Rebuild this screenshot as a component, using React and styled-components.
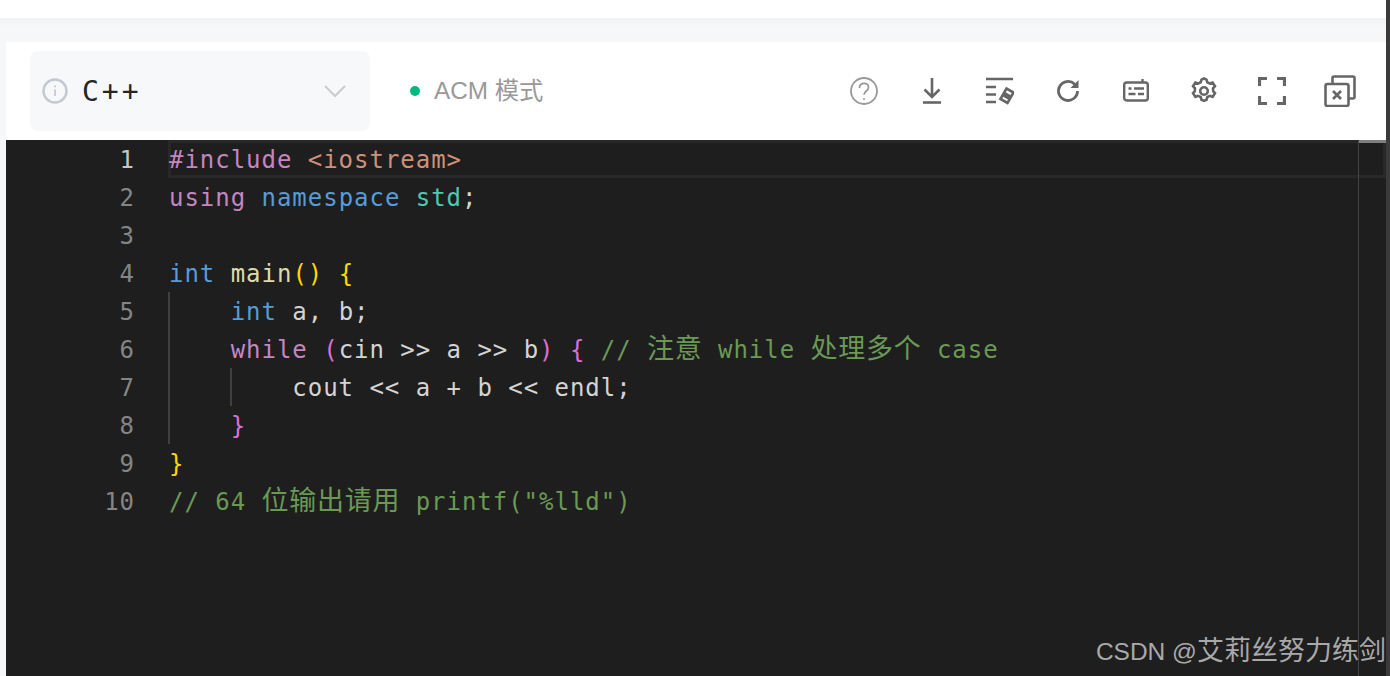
import React from 'react'
import styled, { createGlobalStyle } from 'styled-components'

const mono = `"DejaVu Sans Mono", "Liberation Mono", monospace`

const GlobalStyle = createGlobalStyle`
  html, body {
    margin: 0;
    padding: 0;
    background: #fff;
    overflow: hidden;
  }
`

const Page = styled.div`
  width: 1390px;
  height: 676px;
  display: flex;
  overflow: hidden;
  background: #fff;
`

const Main = styled.div`
  flex: 1;
  min-width: 0;
  display: flex;
  flex-direction: column;
`

const RightStrip = styled.div`
  width: 4px;
  flex: none;
  background: #3a3a3a;
`

const TopBand = styled.div`
  height: 18px;
  flex: none;
  background: #fff;
`

const GreyBand = styled.div`
  height: 24px;
  flex: none;
  background: linear-gradient(#f2f3f5, #f6f7f9 40%);
`

const Panel = styled.div`
  flex: 1;
  min-height: 0;
  display: flex;
  flex-direction: column;
  padding-left: 6px;
  background: #f6f7f9;
`

const Toolbar = styled.div`
  height: 98px;
  flex: none;
  display: flex;
  align-items: center;
  padding: 0 30px 0 24px;
  background: #fff;
`

const LangSelect = styled.div`
  width: 340px;
  height: 80px;
  box-sizing: border-box;
  padding: 0 21px 0 11px;
  display: flex;
  align-items: center;
  background: #f7f8fa;
  border-radius: 8px;
`

const LangName = styled.span`
  margin-left: 13px;
  flex: 1;
  font: 28px ${mono};
  letter-spacing: 3px;
  color: #262626;
`

const Mode = styled.div`
  margin-left: 40px;
  display: flex;
  align-items: center;
  gap: 14px;
  font: 24.3px "Liberation Sans", "Noto Sans CJK SC", sans-serif;
  color: #999;
`

const ModeLabel = styled.span`
  margin-top: -5px;
`

const Dot = styled.span`
  width: 10px;
  height: 10px;
  border-radius: 50%;
  background: #00b97f;
`

const Actions = styled.div`
  margin-left: auto;
  display: flex;
  align-items: center;
  gap: 40px;
`

const Icon = styled.svg`
  width: 28px;
  height: 28px;
  flex: none;
  fill: none;
  stroke: ${props => props.$colour || '#666'};
  stroke-width: ${props => props.$weight || 2.4};
`

const WideIcon = styled(Icon)`
  width: 32px;
  height: 32px;
  margin-left: -2px;
`

const Editor = styled.div`
  flex: 1;
  min-height: 0;
  position: relative;
  display: flex;
  background: #1e1e1e;
  overflow: hidden;
  font-family: ${mono};
  font-size: 24px;
  letter-spacing: 0.97px;
  white-space: pre;
`

const Gutter = styled.div`
  width: 129px;
  flex: none;
`

const LineNo = styled.div`
  height: 38px;
  line-height: 40px;
  text-align: right;
  color: ${props => (props.$active ? '#c6c6c6' : '#858585')};
`

const Code = styled.div`
  margin-left: 33px;
  flex: 1;
  min-width: 0;
`

const Line = styled.div`
  height: 38px;
  line-height: 40px;
  padding-left: 1px;
  position: relative;
  color: #d4d4d4;
  ${props => props.$active && `box-shadow: inset 0 0 0 3px #282828;`}
`

const Guide = styled.span`
  position: absolute;
  top: 0;
  bottom: 0;
  width: 2px;
  left: ${props => props.$at}px;
  background: #404040;
`

const Tok = styled.span`
  color: ${props => props.$c};
`

const Cjk = styled.span`
  font-family: "Noto Sans CJK SC", sans-serif;
  font-size: 27px;
  letter-spacing: 0.75px;
  line-height: 1;
`

const Ruler = styled.div`
  position: absolute;
  top: 0;
  bottom: 0;
  left: 1352px;
  width: 28px;
  border-left: 1px solid #444;
  background: linear-gradient(#7f7f7f 0 3px, transparent 3px);
`

const Watermark = styled.div`
  position: absolute;
  right: 0;
  bottom: 8px;
  font: 24.5px "Liberation Sans", "Noto Sans CJK SC", sans-serif;
  letter-spacing: 0;
  color: #a9a9a9;
`

const WatermarkName = styled.span`
  font-size: 27px;
`

const Blue = '#569cd6'
const Purple = '#c586c0'
const Gold = '#ffd700'
const Pink = '#da70d6'
const Green = '#6a9955'

const Comment = ({ children }) => <Tok $c={Green}>{children}</Tok>

const lines = [
  <><Tok $c={Purple}>#include</Tok> <Tok $c="#ce9178">&lt;iostream&gt;</Tok></>,
  <><Tok $c={Purple}>using</Tok> <Tok $c={Blue}>namespace</Tok> <Tok $c="#4ec9b0">std</Tok>;</>,
  '',
  <><Tok $c={Blue}>int</Tok> <Tok $c="#dcdcaa">main</Tok><Tok $c={Gold}>()</Tok> <Tok $c={Gold}>{'{'}</Tok></>,
  <>{'    '}<Tok $c={Blue}>int</Tok> a, b;</>,
  <>{'    '}<Tok $c={Purple}>while</Tok> <Tok $c={Pink}>(</Tok>cin &gt;&gt; a &gt;&gt; b<Tok $c={Pink}>)</Tok> <Tok $c={Pink}>{'{'}</Tok> <Comment>// <Cjk>注意</Cjk> while <Cjk>处理多个</Cjk> case</Comment></>,
  <>{'        '}cout &lt;&lt; a + b &lt;&lt; endl;</>,
  <>{'    '}<Tok $c={Pink}>{'}'}</Tok></>,
  <Tok $c={Gold}>{'}'}</Tok>,
  <Comment>// 64 <Cjk>位输出请用</Cjk> printf("%lld")</Comment>,
]

// indent guides per line, offset from the code column
const guides = { 4: [0], 5: [0], 6: [0, 62], 7: [0] }

const App = () => (
  <Page>
    <GlobalStyle />
    <Main>
      <TopBand />
      <GreyBand />
      <Panel>
        <Toolbar>
          <LangSelect>
            <Icon viewBox="0 0 28 28" $colour="#c4c8d0" $weight={2.4}>
              <circle cx="14" cy="14" r="11.5" />
              <path d="M14 12.5v6.5" strokeWidth="1.8" />
              <path d="M14 8.5v1.8" strokeWidth="1.8" />
            </Icon>
            <LangName>C++</LangName>
            <Icon viewBox="0 0 28 28" $colour="#c9ccd3" $weight={2}>
              <path d="M4 9l10 10 10-10" />
            </Icon>
          </LangSelect>
          <Mode>
            <Dot />
            <ModeLabel>ACM 模式</ModeLabel>
          </Mode>
          <Actions>
            <Icon viewBox="0 0 28 28" $colour="#999" $weight={1.8}>
              <circle cx="14" cy="14" r="13" />
              <path d="M9.5 11c0-3 2-4.6 4.6-4.600s4.400 1.700 4.400 4c0 3.600-4.500 3.600-4.500 7.400" />
              <path d="M14 21v1.800" />
            </Icon>
            <Icon viewBox="0 0 28 28" $weight={2.6}>
              <path d="M14 1v18M6.500 12.500l7.500 7.500 7.500-7.500" />
              <path d="M5 25.500h18" />
            </Icon>
            <Icon viewBox="0 0 28 28" $weight={2.6}>
              <path d="M0 2h27M0 10h10M0 17.500h10M0 25h10" />
              <path d="M14.500 22l6-10.500 7 4-6 10.500z" />
              <path d="M17.500 17l7 4" strokeWidth="5" />
            </Icon>
            <Icon viewBox="0 0 28 28" $weight={2.8}>
              <path d="M23.500 14a9.500 9.500 0 1 1-2.800-6.800" />
              <path d="M24.500 3v8h-8z" fill="#666" stroke="none" />
            </Icon>
            <Icon viewBox="0 0 28 28" $weight={2.4}>
              <rect x="2.200" y="5.500" width="23.600" height="18" rx="2.500" />
              <path d="M20.500 2v3.500" />
              <path d="M6.500 11.500h3M12 11.500h10M6.500 17h7M16 17h6" strokeWidth="2.600" />
            </Icon>
            <Icon viewBox="0 0 28 28" $weight={2.6}>
              <path d="M14 1.500l2.500 1.100.8 2.800 2.700 1.100 2.600-1 2.400 3.700-1.900 2.100v2.800l1.900 2.100-2.400 3.700-2.600-1-2.700 1.100-.8 2.800-2.500 1.100-2.500-1.100-.8-2.800-2.700-1.100-2.600 1-2.400-3.700 1.900-2.100v-2.800l-1.900-2.100 2.400-3.700 2.600 1 2.700-1.100.8-2.800z" />
              <circle cx="14" cy="14" r="3.800" />
            </Icon>
            <Icon viewBox="0 0 28 28" $weight={3.2}>
              <path d="M9 1.500H1.500V9M19 1.500h7.500V9M9 26.500H1.500V19M19 26.500h7.500V19" />
            </Icon>
            <WideIcon viewBox="0 0 32 32" $weight={2.6}>
              <rect x="1.500" y="9" width="23" height="22" rx="2" />
              <path d="M8.500 9V3a1.500 1.500 0 0 1 1.500-1.500h19A1.500 1.500 0 0 1 30.500 3v19a1.500 1.500 0 0 1-1.500 1.500h-4.500" />
              <path d="M9 16l8 8M17 16l-8 8" />
            </WideIcon>
          </Actions>
        </Toolbar>
        <Editor>
          <Gutter>
            {lines.map((_, i) => (
              <LineNo key={i} $active={i === 0}>{i + 1}</LineNo>
            ))}
          </Gutter>
          <Code>
            {lines.map((line, i) => (
              <Line key={i} $active={i === 0}>
                {(guides[i] || []).map(at => <Guide key={at} $at={at} />)}
                {line}
              </Line>
            ))}
          </Code>
          <Ruler />
          <Watermark>CSDN @<WatermarkName>艾莉丝努力练剑</WatermarkName></Watermark>
        </Editor>
      </Panel>
    </Main>
    <RightStrip />
  </Page>
)

export default App
